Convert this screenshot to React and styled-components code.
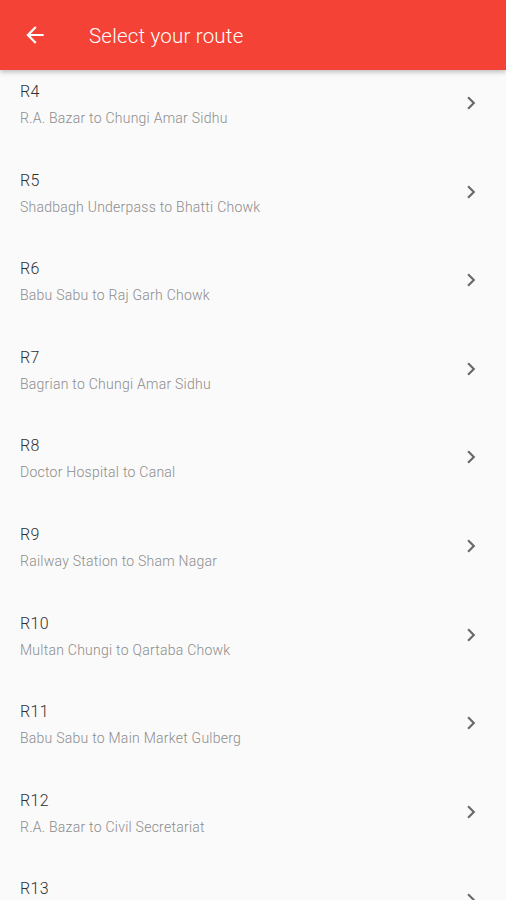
import React from 'react'
import styled, { createGlobalStyle } from 'styled-components'
import { MdArrowBack, MdChevronRight } from 'react-icons/md'

const routes = [
  { code: 'R4', name: 'R.A. Bazar to Chungi Amar Sidhu' },
  { code: 'R5', name: 'Shadbagh Underpass to Bhatti Chowk' },
  { code: 'R6', name: 'Babu Sabu to Raj Garh Chowk' },
  { code: 'R7', name: 'Bagrian to Chungi Amar Sidhu' },
  { code: 'R8', name: 'Doctor Hospital to Canal' },
  { code: 'R9', name: 'Railway Station to Sham Nagar' },
  { code: 'R10', name: 'Multan Chungi to Qartaba Chowk' },
  { code: 'R11', name: 'Babu Sabu to Main Market Gulberg' },
  { code: 'R12', name: 'R.A. Bazar to Civil Secretariat' },
  { code: 'R13', name: 'Thokar Niaz Baig to Bhatti Chowk' },
]

export default function App() {
  return (
    <>
      <GlobalStyle />
      <Screen>
        <AppBar>
          <BackButton aria-label="back">
            <MdArrowBack size={26} />
          </BackButton>
          <Title>Select your route</Title>
        </AppBar>
        <List>
          {routes.map(r => (
            <Row key={r.code}>
              <Texts>
                <Code>{r.code}</Code>
                <Name>{r.name}</Name>
              </Texts>
              <Chevron>
                <MdChevronRight size={26} />
              </Chevron>
            </Row>
          ))}
        </List>
      </Screen>
    </>
  )
}

const GlobalStyle = createGlobalStyle`
html, body {
    margin: 0;
    padding: 0;
    background: #fafafa;
    font-family: Roboto, "Liberation Sans", sans-serif;
}
`;

const Screen = styled.div`
width: 506px;
height: 900px;
overflow: hidden;
background: #fafafa;
`;

const AppBar = styled.header`
position: relative;
z-index: 2;
height: 70px;
display: flex;
align-items: center;
background: #f44336;
box-shadow: 0 2px 5px rgba(0,0,0,0.25);
`;

const BackButton = styled.button`
border: 0;
background: none;
padding: 0;
margin-left: 22px;
width: 26px;
height: 26px;
color: #fff;
display: flex;
align-items: center;
justify-content: center;
`;

const Title = styled.h1`
margin: 2px 0 0 41px;
font-size: 20.5px;
font-weight: 300;
color: #fff;
letter-spacing: 0.2px;
`;

const List = styled.div`
display: flex;
flex-direction: column;
`;

const Row = styled.div`
height: 88.6px;
flex-shrink: 0;
box-sizing: border-box;
display: flex;
align-items: flex-start;
padding: 12px 22px 0 20px;
`;

const Texts = styled.div`
flex: 1;
display: flex;
flex-direction: column;
`;

const Code = styled.div`
font-size: 16px;
line-height: 20px;
font-weight: 300;
letter-spacing: 0.4px;
color: #303030;
`;

const Name = styled.div`
margin-top: 8px;
font-size: 14px;
line-height: 17px;
font-weight: 300;
letter-spacing: 0.25px;
color: #8c8c8c;
`;

const Chevron = styled.div`
margin-top: 8px;
color: #6a6a6a;
display: flex;
`;
